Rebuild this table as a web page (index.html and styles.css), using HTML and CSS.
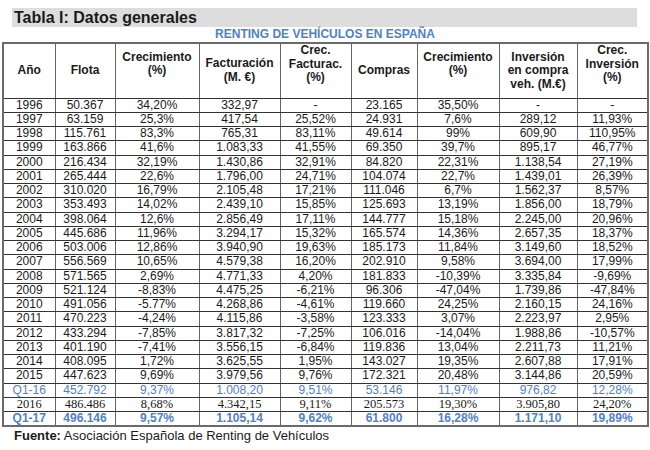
FILE: index.html
```html
<!DOCTYPE html>
<html lang="es">
<head>
<meta charset="utf-8">
<link rel="stylesheet" href="styles.css">
</head>
<body>
<div class="page">
  <h1 class="title">Tabla I: Datos generales</h1>
  <div class="subtitle">RENTING DE VEHÍCULOS EN ESPAÑA</div>
  <table class="data">
    <colgroup>
      <col style="width:52px"><col style="width:60px"><col style="width:84px"><col style="width:81px"><col style="width:71px"><col style="width:66px"><col style="width:82px"><col style="width:78px"><col style="width:71px">
    </colgroup>
    <thead>
      <tr>
        <th>Año</th>
        <th>Flota</th>
        <th class="up">Crecimiento<br>(%)</th>
        <th>Facturación<br>(M. €)</th>
        <th class="up">Crec.<br>Facturac.<br>(%)</th>
        <th>Compras</th>
        <th class="up">Crecimiento<br>(%)</th>
        <th>Inversión<br>en compra<br>veh. (M.€)</th>
        <th class="up">Crec.<br>Inversión<br>(%)</th>
      </tr>
    </thead>
    <tbody>
      <tr><td>1996</td><td>50.367</td><td>34,20%</td><td>332,97</td><td>-</td><td>23.165</td><td>35,50%</td><td>-</td><td>-</td></tr>
      <tr><td>1997</td><td>63.159</td><td>25,3%</td><td>417,54</td><td>25,52%</td><td>24.931</td><td>7,6%</td><td>289,12</td><td>11,93%</td></tr>
      <tr><td>1998</td><td>115.761</td><td>83,3%</td><td>765,31</td><td>83,11%</td><td>49.614</td><td>99%</td><td>609,90</td><td>110,95%</td></tr>
      <tr><td>1999</td><td>163.866</td><td>41,6%</td><td>1.083,33</td><td>41,55%</td><td>69.350</td><td>39,7%</td><td>895,17</td><td>46,77%</td></tr>
      <tr><td>2000</td><td>216.434</td><td>32,19%</td><td>1.430,86</td><td>32,91%</td><td>84.820</td><td>22,31%</td><td>1.138,54</td><td>27,19%</td></tr>
      <tr><td>2001</td><td>265.444</td><td>22,6%</td><td>1.796,00</td><td>24,71%</td><td>104.074</td><td>22,7%</td><td>1.439,01</td><td>26,39%</td></tr>
      <tr><td>2002</td><td>310.020</td><td>16,79%</td><td>2.105,48</td><td>17,21%</td><td>111.046</td><td>6,7%</td><td>1.562,37</td><td>8,57%</td></tr>
      <tr><td>2003</td><td>353.493</td><td>14,02%</td><td>2.439,10</td><td>15,85%</td><td>125.693</td><td>13,19%</td><td>1.856,00</td><td>18,79%</td></tr>
      <tr><td>2004</td><td>398.064</td><td>12,6%</td><td>2.856,49</td><td>17,11%</td><td>144.777</td><td>15,18%</td><td>2.245,00</td><td>20,96%</td></tr>
      <tr><td>2005</td><td>445.686</td><td>11,96%</td><td>3.294,17</td><td>15,32%</td><td>165.574</td><td>14,36%</td><td>2.657,35</td><td>18,37%</td></tr>
      <tr><td>2006</td><td>503.006</td><td>12,86%</td><td>3.940,90</td><td>19,63%</td><td>185.173</td><td>11,84%</td><td>3.149,60</td><td>18,52%</td></tr>
      <tr><td>2007</td><td>556.569</td><td>10,65%</td><td>4.579,38</td><td>16,20%</td><td>202.910</td><td>9,58%</td><td>3.694,00</td><td>17,99%</td></tr>
      <tr><td>2008</td><td>571.565</td><td>2,69%</td><td>4.771,33</td><td>4,20%</td><td>181.833</td><td>-10,39%</td><td>3.335,84</td><td>-9,69%</td></tr>
      <tr><td>2009</td><td>521.124</td><td>-8,83%</td><td>4.475,25</td><td>-6,21%</td><td>96.306</td><td>-47,04%</td><td>1.739,86</td><td>-47,84%</td></tr>
      <tr><td>2010</td><td>491.056</td><td>-5.77%</td><td>4.268,86</td><td>-4,61%</td><td>119.660</td><td>24,25%</td><td>2.160,15</td><td>24,16%</td></tr>
      <tr><td>2011</td><td>470.223</td><td>-4,24%</td><td>4.115,86</td><td>-3,58%</td><td>123.333</td><td>3,07%</td><td>2.223,97</td><td>2,95%</td></tr>
      <tr><td>2012</td><td>433.294</td><td>-7,85%</td><td>3.817,32</td><td>-7,25%</td><td>106.016</td><td>-14,04%</td><td>1.988,86</td><td>-10,57%</td></tr>
      <tr><td>2013</td><td>401.190</td><td>-7,41%</td><td>3.556,15</td><td>-6,84%</td><td>119.836</td><td>13,04%</td><td>2.211,73</td><td>11,21%</td></tr>
      <tr><td>2014</td><td>408.095</td><td>1,72%</td><td>3.625,55</td><td>1,95%</td><td>143.027</td><td>19,35%</td><td>2.607,88</td><td>17,91%</td></tr>
      <tr><td>2015</td><td>447.623</td><td>9,69%</td><td>3.979,56</td><td>9,76%</td><td>172.321</td><td>20,48%</td><td>3.144,86</td><td>20,59%</td></tr>
      <tr class="blue"><td>Q1-16</td><td>452.792</td><td>9,37%</td><td>1.008,20</td><td>9,51%</td><td>53.146</td><td>11,97%</td><td>976,82</td><td>12,28%</td></tr>
      <tr class="serif"><td>2016</td><td>486.486</td><td>8,68%</td><td>4.342,15</td><td>9,11%</td><td>205.573</td><td>19,30%</td><td>3.905,80</td><td>24,20%</td></tr>
      <tr class="blue strong"><td>Q1-17</td><td>496.146</td><td>9,57%</td><td>1.105,14</td><td>9,62%</td><td>61.800</td><td>16,28%</td><td>1.171,10</td><td>19,89%</td></tr>
    </tbody>
  </table>
  <p class="source"><b>Fuente:</b> Asociación Española de Renting de Vehículos</p>
</div>
</body>
</html>
```

FILE: styles.css
```css
html, body {
  margin: 0;
  padding: 0;
  background: #ffffff;
}

.page {
  width: 650px;
  height: 450px;
  padding-top: 8px;
  box-sizing: border-box;
  font-family: "Liberation Sans", Arial, sans-serif;
  color: #1a1a1a;
}

.title {
  margin: 0 0 0 12px;
  width: 625px;
  height: 19px;
  padding-left: 2px;
  box-sizing: border-box;
  background: #dcdddc;
  font-size: 16px;
  font-weight: bold;
  line-height: 20px;
  color: #1a1a1a;
}

.subtitle {
  text-align: center;
  color: #4f81c7;
  font-weight: bold;
  font-size: 12px;
  line-height: 15px;
  height: 15px;
}

.data {
  margin-left: 2px;
  border-collapse: collapse;
  table-layout: fixed;
  width: 645px;
  border: 2px solid #6a6a6a;
}

.data th,
.data td {
  border-left: 1px solid #666;
  border-right: 1px solid #666;
  border-top: 1px solid #333;
  border-bottom: 1px solid #333;
  padding: 0;
  text-align: center;
  white-space: nowrap;
}

.data th {
  font-size: 12px;
  font-weight: bold;
  line-height: 13.5px;
  height: 53px;
  vertical-align: middle;
}

.data th.up {
  height: 40px;
  padding-bottom: 13px;
}

.data td {
  font-size: 12px;
  line-height: 13px;
  height: 13.26px;
}

.data tr.blue td {
  color: #4f81c7;
}

.data tr.strong td {
  font-weight: bold;
}

.data tr.serif td {
  font-family: "Liberation Serif", "Times New Roman", serif;
  font-size: 12.5px;
}

.source {
  margin: 1px 0 0 14px;
  font-size: 13px;
  line-height: 15px;
}
```
